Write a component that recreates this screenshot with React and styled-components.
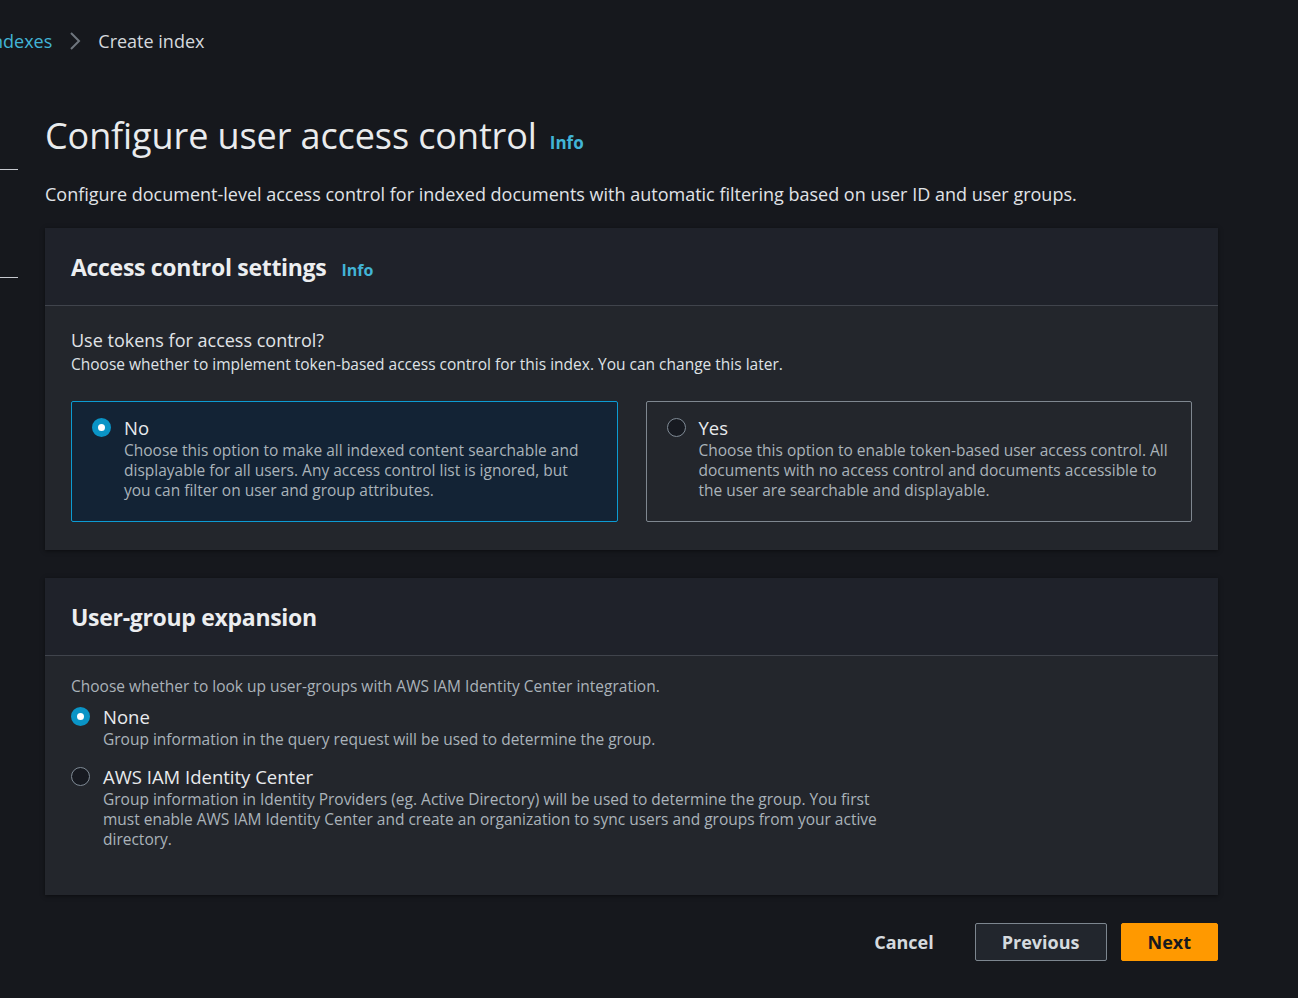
import React, { useState } from "react";
import styled, { createGlobalStyle } from "styled-components";

const GlobalStyle = createGlobalStyle`
  html, body {
    margin: 0;
    background: #16181d;
    font-family: "Open Sans", "Noto Sans", sans-serif;
    color: #d1d5db;
  }
  * { box-sizing: border-box; }
`;

const Page = styled.div`
  position: relative;
  width: 1298px;
  height: 998px;
  overflow: hidden;
  padding: 0 80px 0 45px;
`;

const Rail = styled.div`
  position: absolute;
  left: 0;
  top: 169px;
  width: 18px;
  display: flex;
  flex-direction: column;
  gap: 107px;
`;

const RailLine = styled.div`
  height: 1px;
  background: #c6c9cf;
`;

const Breadcrumbs = styled.nav`
  display: flex;
  align-items: center;
  gap: 16px;
  height: 82px;
  margin-left: -58px;
  font-size: 18px;
`;

const Crumb = styled.span`
  color: ${(p) => (p.$link ? "#42b4d6" : "#d5d9de")};
`;

const Title = styled.h1`
  display: flex;
  align-items: baseline;
  gap: 13px;
  margin: 28px 0 0;
  font-size: 36px;
  font-weight: 400;
  letter-spacing: -0.1px;
  color: #e9ebed;
  line-height: 52px;
`;

const InfoLink = styled.span`
  font-size: ${(p) => p.$size || 16}px;
  font-weight: 700;
  color: #42b4d6;
  letter-spacing: 0;
`;

const Description = styled.p`
  margin: 13px 0 22px;
  font-size: 18px;
  line-height: 24px;
  color: #e0e3e7;
`;

const Panel = styled.section`
  background: #23262c;
  box-shadow: 0 1px 4px rgba(0, 0, 0, 0.5);
  margin-bottom: 28px;
`;

const PanelHeader = styled.header`
  display: flex;
  align-items: baseline;
  gap: 15px;
  height: 78px;
  padding: 24px 26px 0;
  background: #1f222a;
  border-bottom: 1px solid #40444c;
`;

const PanelTitle = styled.h2`
  margin: 0;
  font-size: 23px;
  font-weight: 700;
  letter-spacing: -0.3px;
  color: #eceef0;
  line-height: 30px;
`;

const PanelBody = styled.div`
  padding: ${(p) => p.$pad || "22px 26px 28px"};
`;

const Question = styled.div`
  font-size: 18px;
  line-height: 24px;
  color: #e0e3e7;
`;

const Hint = styled.div`
  font-size: 15.5px;
  line-height: 24px;
  color: ${(p) => (p.$muted ? "#aab2b9" : "#dfe2e6")};
`;

const Tiles = styled.div`
  display: grid;
  grid-template-columns: 1fr 1fr;
  gap: 28px;
  margin-top: 25px;
`;

const Tile = styled.label`
  display: flex;
  gap: 13px;
  height: 121px;
  padding: 14px 20px;
  border: 1px solid ${(p) => (p.$selected ? "#0c9bd3" : "#7f8790")};
  border-radius: 2px;
  background: ${(p) => (p.$selected ? "#132335" : "transparent")};
  cursor: pointer;
`;

const Radio = styled.span`
  flex: 0 0 auto;
  width: 19px;
  height: 19px;
  margin-top: 2px;
  border-radius: 50%;
  border: ${(p) => (p.$checked ? "6px solid #0a94c6" : "1.5px solid #7f8a95")};
  background: ${(p) => (p.$checked ? "#ffffff" : "#171a21")};
`;

const OptionText = styled.div`
  display: flex;
  flex-direction: column;
`;

const OptionLabel = styled.div`
  font-size: 18.5px;
  line-height: 23px;
  color: #e8eaed;
`;

const OptionDesc = styled.div`
  font-size: 15.5px;
  line-height: 20px;
  color: #aab3ba;
  margin-top: 1px;
  max-width: ${(p) => p.$max || "none"};
`;

const RadioList = styled.div`
  display: flex;
  flex-direction: column;
  gap: 16px;
  margin-top: 7px;
`;

const RadioRow = styled.label`
  display: flex;
  gap: 13px;
  cursor: pointer;
`;

const Actions = styled.div`
  display: flex;
  justify-content: flex-end;
  align-items: center;
  gap: 14px;
`;

const Button = styled.button`
  height: 38px;
  padding: 0 26px;
  font-family: inherit;
  font-size: 18px;
  font-weight: 700;
  border-radius: 2px;
  cursor: pointer;
  color: ${(p) => (p.$variant === "primary" ? "#16191f" : "#d5dade")};
  background: ${(p) =>
    p.$variant === "primary" ? "#ff9900" : p.$variant === "normal" ? "#22262d" : "transparent"};
  border: 1px solid
    ${(p) => (p.$variant === "normal" ? "#7d868f" : p.$variant === "primary" ? "#ff9900" : "transparent")};
`;

const Chevron = () => (
  <svg width="14" height="20" viewBox="0 0 14 20" fill="none">
    <path d="M3 2l8 8-8 8" stroke="#6f767e" strokeWidth="2" />
  </svg>
);

export default function App() {
  const [tokens, setTokens] = useState("no");
  const [group, setGroup] = useState("none");

  return (
    <>
      <GlobalStyle />
      <Page>
        <Rail>
          <RailLine />
          <RailLine />
        </Rail>
        <Breadcrumbs>
          <Crumb $link>Indexes</Crumb>
          <Chevron />
          <Crumb>Create index</Crumb>
        </Breadcrumbs>

        <Title>
          Configure user access control <InfoLink $size={17}>Info</InfoLink>
        </Title>
        <Description>
          Configure document-level access control for indexed documents with automatic filtering based
          on user ID and user groups.
        </Description>

        <Panel>
          <PanelHeader>
            <PanelTitle>Access control settings</PanelTitle>
            <InfoLink>Info</InfoLink>
          </PanelHeader>
          <PanelBody>
            <Question>Use tokens for access control?</Question>
            <Hint>
              Choose whether to implement token-based access control for this index. You can change
              this later.
            </Hint>
            <Tiles>
              <Tile $selected={tokens === "no"} onClick={() => setTokens("no")}>
                <Radio $checked={tokens === "no"} />
                <OptionText>
                  <OptionLabel>No</OptionLabel>
                  <OptionDesc $max="468px">
                    Choose this option to make all indexed content searchable and displayable for
                    all users. Any access control list is ignored, but you can filter on user and
                    group attributes.
                  </OptionDesc>
                </OptionText>
              </Tile>
              <Tile $selected={tokens === "yes"} onClick={() => setTokens("yes")}>
                <Radio $checked={tokens === "yes"} />
                <OptionText>
                  <OptionLabel>Yes</OptionLabel>
                  <OptionDesc $max="472px">
                    Choose this option to enable token-based user access control. All documents with
                    no access control and documents accessible to the user are searchable and
                    displayable.
                  </OptionDesc>
                </OptionText>
              </Tile>
            </Tiles>
          </PanelBody>
        </Panel>

        <Panel>
          <PanelHeader>
            <PanelTitle>User-group expansion</PanelTitle>
          </PanelHeader>
          <PanelBody $pad="18px 26px 46px">
            <Hint $muted>Choose whether to look up user-groups with AWS IAM Identity Center integration.</Hint>
            <RadioList>
              <RadioRow onClick={() => setGroup("none")}>
                <Radio $checked={group === "none"} />
                <OptionText>
                  <OptionLabel>None</OptionLabel>
                  <OptionDesc>Group information in the query request will be used to determine the group.</OptionDesc>
                </OptionText>
              </RadioRow>
              <RadioRow onClick={() => setGroup("iam")}>
                <Radio $checked={group === "iam"} />
                <OptionText>
                  <OptionLabel>AWS IAM Identity Center</OptionLabel>
                  <OptionDesc $max="780px">
                    Group information in Identity Providers (eg. Active Directory) will be used to
                    determine the group. You first must enable AWS IAM Identity Center and create an
                    organization to sync users and groups from your active directory.
                  </OptionDesc>
                </OptionText>
              </RadioRow>
            </RadioList>
          </PanelBody>
        </Panel>

        <Actions>
          <Button $variant="link">Cancel</Button>
          <Button $variant="normal">Previous</Button>
          <Button $variant="primary">Next</Button>
        </Actions>
      </Page>
    </>
  );
}
